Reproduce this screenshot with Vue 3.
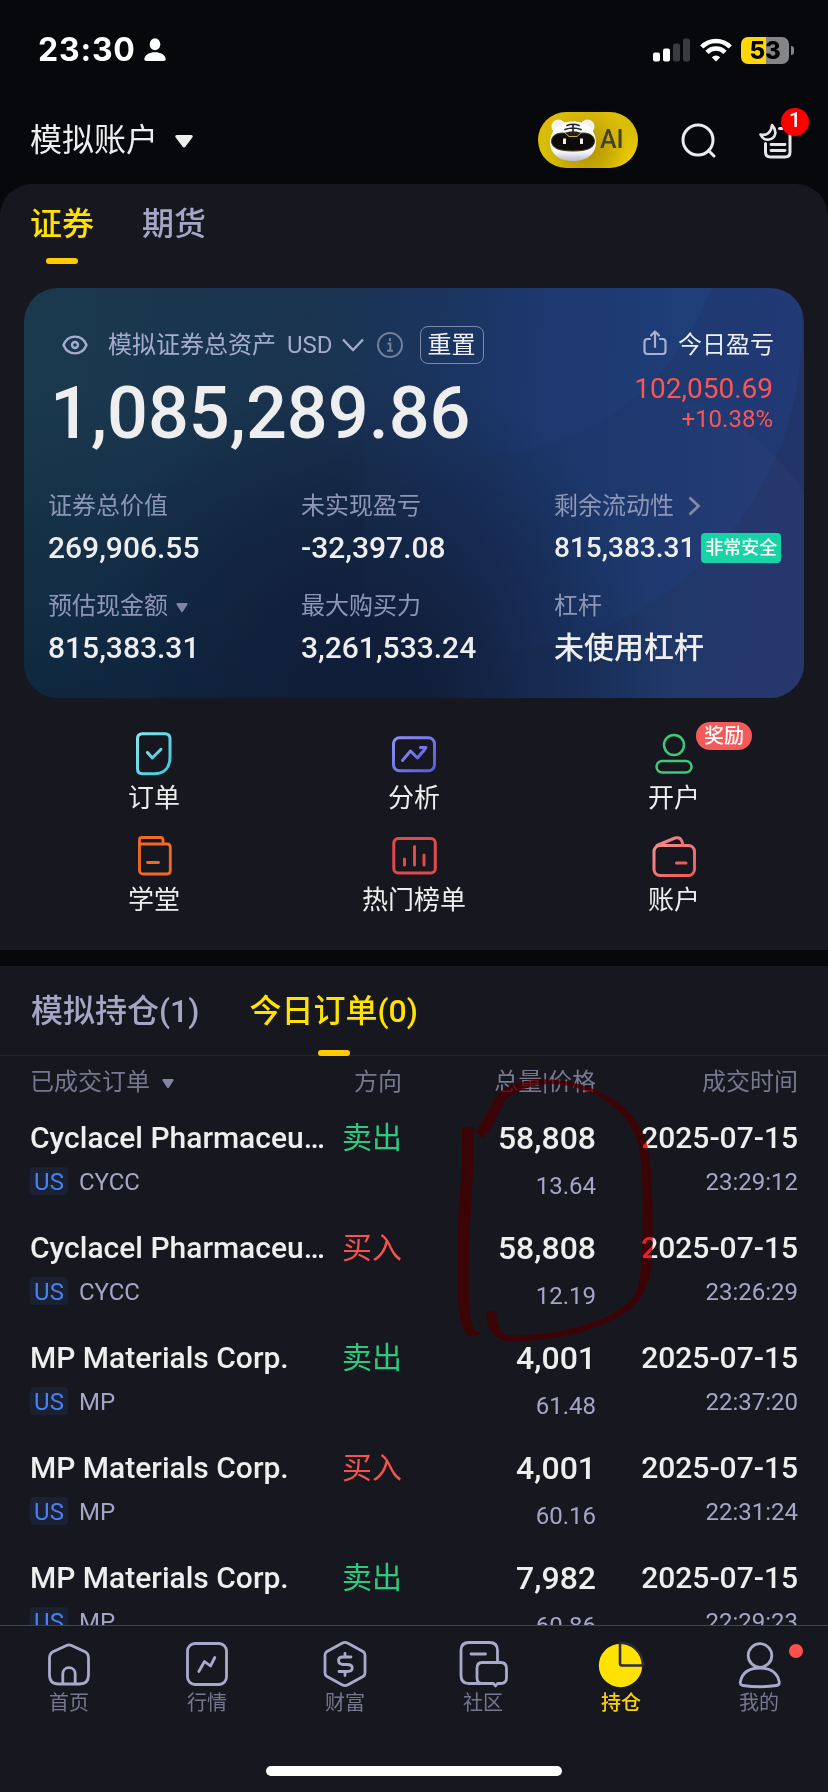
<script setup>
const stats = [
  { label: '证券总价值', value: '269,906.55' },
  { label: '未实现盈亏', value: '-32,397.08' },
  { label: '剩余流动性', value: '815,383.31', more: true, tag: '非常安全' },
  { label: '预估现金额', value: '815,383.31', drop: true },
  { label: '最大购买力', value: '3,261,533.24' },
  { label: '杠杆', value: '未使用杠杆' },
]

const shortcuts = [
  { id: 'order', label: '订单' },
  { id: 'analysis', label: '分析' },
  { id: 'open', label: '开户', badge: '奖励' },
  { id: 'school', label: '学堂' },
  { id: 'rank', label: '热门榜单' },
  { id: 'wallet', label: '账户' },
]

const orders = [
  { name: 'Cyclacel Pharmaceu…', code: 'CYCC', side: '卖出', qty: '58,808', price: '13.64', date: '2025-07-15', time: '23:29:12' },
  { name: 'Cyclacel Pharmaceu…', code: 'CYCC', side: '买入', qty: '58,808', price: '12.19', date: '2025-07-15', time: '23:26:29' },
  { name: 'MP Materials Corp.', code: 'MP', side: '卖出', qty: '4,001', price: '61.48', date: '2025-07-15', time: '22:37:20' },
  { name: 'MP Materials Corp.', code: 'MP', side: '买入', qty: '4,001', price: '60.16', date: '2025-07-15', time: '22:31:24' },
  { name: 'MP Materials Corp.', code: 'MP', side: '卖出', qty: '7,982', price: '60.86', date: '2025-07-15', time: '22:29:23' },
]

const tabs = [
  { id: 'home', label: '首页' },
  { id: 'market', label: '行情' },
  { id: 'wealth', label: '财富' },
  { id: 'social', label: '社区' },
  { id: 'hold', label: '持仓', active: true },
  { id: 'me', label: '我的', dot: true },
]

const markLayers = ['multiply', 'lighten']
</script>

<template>
  <div class="screen">
    <div class="status">
      <span class="clock">23:30</span>
      <svg class="person" width="22" height="24" viewBox="0 0 22 24" fill="#fff">
        <ellipse cx="11" cy="6.2" rx="5.3" ry="6" />
        <path d="M2.500 23Q0 23 .4 20.500C1.500 16.500 5.500 14.300 11 14.300S20.500 16.500 21.600 20.500Q22 23 19.500 23Z" />
      </svg>
      <span class="grow"></span>
      <svg class="signal" width="37" height="24" viewBox="0 0 37 24">
        <rect x="0" y="14.500" width="7" height="9" rx="2" fill="#fff" />
        <rect x="10" y="10.500" width="7" height="13" rx="2" fill="#fff" />
        <rect x="20" y="5.500" width="7" height="18" rx="2" fill="#3b3b3d" />
        <rect x="30" y="0.500" width="7" height="23" rx="2" fill="#3b3b3d" />
      </svg>
      <svg class="wifi" width="32" height="24" viewBox="0 0 32 24" fill="none" stroke="#fff" stroke-width="4.600">
        <path d="M1.800 9C9.500 .9 22.500 .9 30.200 9" />
        <path d="M7 14.300C12 9.300 20 9.300 25 14.300" />
        <path d="M11.800 19.200Q16 15.600 20.200 19.200L16 23.600Z" fill="#fff" stroke="none" />
      </svg>
      <span class="battery">53</span>
      <span class="nub"></span>
    </div>

    <div class="topbar">
      <span class="account">模拟账户</span>
      <svg class="caret" width="18" height="13" viewBox="0 0 18 13"><path d="M2 0H16Q19 .3 17 3L10.500 11.500Q9 13.500 7.500 11.500L1 3Q-1 .3 2 0Z" fill="#eee" /></svg>
      <span class="grow"></span>
      <div class="ai">
        <svg width="48" height="44" viewBox="0 0 48 44">
          <defs>
            <linearGradient id="fur" x1="0" y1="0" x2="0" y2="1">
              <stop offset="0" stop-color="#fff" /><stop offset=".78" stop-color="#f4f4f8" /><stop offset="1" stop-color="#b9b9cc" />
            </linearGradient>
          </defs>
          <circle cx="9.500" cy="8.500" r="7" fill="#f2f2f2" />
          <circle cx="38.500" cy="8.500" r="7" fill="#f2f2f2" />
          <path d="M24 3.500C38 3.500 46.500 12 47 24C47 36 38 43 24 43S1 36 1 24C1.500 12 10 3.500 24 3.500Z" fill="url(#fur)" />
          <path d="M24 17C35 13 45 15 45.500 23C45.500 30 38 33 24 33S2.500 30 2.500 23C3 15 13 13 24 17Z" fill="#0f0b0b" stroke="#46401a" stroke-width="1" />
          <path d="M18 7.500Q24 5 30 7.500M16 11.500Q24 8.500 32 11.500M18 15Q24 13 30 15M24 6.500V18" stroke="#242424" stroke-width="1.700" fill="none" stroke-linecap="round" />
          <path d="M16 14.800L20 18.500H28L32 14.800" stroke="#c9b41f" stroke-width="1" fill="#222" />
          <path d="M15.500 20.500V26M32.500 20.500V26" stroke="#eee" stroke-width="3" />
        </svg>
        <span>AI</span>
      </div>
      <svg class="search" width="36" height="36" viewBox="0 0 36 36" fill="none" stroke="#ebebed" stroke-width="3" stroke-linecap="round">
        <circle cx="17" cy="17" r="15" /><path d="M27.500 27.500L33 33" />
      </svg>
      <div class="inbox">
        <svg width="34" height="36" viewBox="0 0 34 36" fill="none" stroke="#e6e6e8" stroke-width="3" stroke-linecap="round" stroke-linejoin="round">
          <path d="M13 2C18.500 8 17 15 10 16.500C6 17 3 15 1.500 11.500C8 13 12.500 9 13 2Z" stroke-width="2.600" />
          <path d="M6.500 20.500V29Q6.500 34 11.500 34H26Q31 34 31 29V12M20.500 5.500H23" />
          <path d="M12 21.500H26M12 27.500H26" stroke-width="2.800" />
        </svg>
        <b>1</b>
      </div>
    </div>

    <section class="assets">
      <div class="market-tabs">
        <span class="on">证券</span><span>期货</span>
      </div>

      <div class="card">
        <svg class="orbs" width="780" height="410" viewBox="24 288 780 410">
          <defs>
            <linearGradient id="orbA" x1="0" x2="1"><stop offset=".45" stop-color="#2850a0" stop-opacity="0" /><stop offset="1" stop-color="#2850a0" stop-opacity=".2" /></linearGradient>
            <linearGradient id="orbB" x1="0" x2="1"><stop offset=".5" stop-color="#2148a0" stop-opacity="0" /><stop offset="1" stop-color="#2148a0" stop-opacity=".25" /></linearGradient>
            <linearGradient id="orbC" x1="0" x2="1"><stop offset=".5" stop-color="#38407c" stop-opacity="0" /><stop offset="1" stop-color="#38407c" stop-opacity=".3" /></linearGradient>
          </defs>
          <circle cx="480" cy="330" r="322" fill="url(#orbB)" />
          <circle cx="470" cy="200" r="257" fill="url(#orbA)" />
          <circle cx="610" cy="620" r="232" fill="url(#orbC)" />
        </svg>
        <div class="card-head">
          <svg class="eye" width="26" height="20" viewBox="0 0 26 20" fill="none" stroke="#a5accb" stroke-width="2.400">
            <path d="M1.500 10C6 -1.200 20 -1.200 24.500 10C20 21.200 6 21.200 1.500 10Z" /><circle cx="13" cy="10" r="3" />
          </svg>
          <span class="total-label">模拟证券总资产</span>
          <span class="usd">USD</span>
          <svg class="chev" width="22" height="14" viewBox="0 0 22 14" fill="none" stroke="#a5accb" stroke-width="2.400"><path d="M1 1.500L11 12L21 1.500" /></svg>
          <svg class="info" width="26" height="26" viewBox="0 0 26 26" fill="none" stroke="#757f9c" stroke-width="2">
            <circle cx="13" cy="13" r="12" /><path d="M13 6V9M10.500 11.500H13.300V18.500M10 18.700H16" />
          </svg>
          <span class="reset">重置</span>
          <span class="grow"></span>
          <svg class="share" width="24" height="26" viewBox="0 0 24 26" fill="none" stroke="#a9b0cf" stroke-width="2.200" stroke-linecap="round" stroke-linejoin="round">
            <path d="M7 9H4.500Q1.500 9 1.500 12V21Q1.500 24 4.500 24H19.500Q22.500 24 22.500 21V12Q22.500 9 19.500 9H17M12 17V2M8 5.500L12 1.500L16 5.500" />
          </svg>
          <span class="today">今日盈亏</span>
        </div>
        <div class="card-main">
          <span class="total">1,085,289.86</span>
          <div class="pnl"><span>102,050.69</span><small>+10.38%</small></div>
        </div>
        <div class="stats">
          <div v-for="s in stats" :key="s.label" class="stat">
            <div class="stat-label">
              {{ s.label }}
              <svg v-if="s.more" class="more" width="13" height="20" viewBox="0 0 13 20" fill="none" stroke="#8289a5" stroke-width="2.800"><path d="M1.500 1.500L10.500 10L1.500 18.500" /></svg>
              <svg v-if="s.drop" class="drop" width="12" height="10" viewBox="0 0 12 10"><path d="M1.500 0H10.500Q12.500 .3 11 2.300L7 8.500Q6 10 5 8.500L1 2.300Q-.5 .3 1.500 0Z" fill="#7f84a6" /></svg>
            </div>
            <div class="stat-value" :class="{ small: s.tag }">{{ s.value }}<em v-if="s.tag">{{ s.tag }}</em></div>
          </div>
        </div>
      </div>

      <div class="shortcuts">
        <div v-for="s in shortcuts" :key="s.id" class="shortcut">
          <div class="pic">
            <svg width="48" height="48" viewBox="0 0 48 48" fill="none" stroke-width="3" stroke-linecap="round" stroke-linejoin="round">
              <defs v-if="s.id === 'order'">
                <linearGradient id="cy" x1="0" y1="0" x2="1" y2="1"><stop offset="0" stop-color="#8ae6ee" /><stop offset="1" stop-color="#3fc4de" /></linearGradient>
                <linearGradient id="vi" x1="0" y1="0" x2="1" y2="1"><stop offset="0" stop-color="#9090f4" /><stop offset="1" stop-color="#575be0" /></linearGradient>
                <linearGradient id="pk" x1="0" y1="0" x2="1" y2="1"><stop offset="0" stop-color="#f59090" /><stop offset="1" stop-color="#ec5858" /></linearGradient>
              </defs>
              <g v-if="s.id === 'order'" stroke="url(#cy)">
                <path d="M12.500 3.800H35Q40 3.800 40 8.800V27C40 38 34 43.800 24 43.800H12.500Q7.500 43.800 7.500 38.800V8.800Q7.500 3.800 12.500 3.800Z" />
                <path d="M17.500 22.500L22.300 28L31 19.300" />
              </g>
              <g v-else-if="s.id === 'analysis'" stroke="url(#vi)">
                <rect x="3.500" y="7.800" width="41" height="33" rx="6" />
                <path d="M12.500 30.500L20.500 21L27.500 28L34.500 19.500M30.500 17.500H36L33 22" />
              </g>
              <g v-else-if="s.id === 'open'" stroke="#3fc878" stroke-width="2.500">
                <circle cx="24" cy="15" r="10" />
                <rect x="6.500" y="31" width="35" height="11.500" rx="5.750" />
              </g>
              <g v-else-if="s.id === 'school'" stroke="#f26a21" stroke-width="2.800" transform="translate(0 1.500)">
                <path d="M9.500 10V6Q9.500 4 11.500 4H30.500Q33 4 33 6.500V9.800" />
                <path d="M9.500 10.500H37Q40.300 10.500 40.300 14V37Q40.300 40.500 37.300 40.500H13.500Q9.500 40.500 9.500 36.500Z" />
                <path d="M17.500 29H28.500" />
              </g>
              <g v-else-if="s.id === 'rank'" stroke="#e2494d" transform="translate(0 2)">
                <rect x="3.800" y="4.500" width="41.500" height="34.500" rx="4.500" />
                <path d="M14.500 25V31M24.500 12.500V31M34 21V31" />
              </g>
              <g v-else stroke="url(#pk)" transform="translate(0 1.500)">
                <rect x="4" y="12" width="40.500" height="30" rx="6" />
                <path d="M7 12L25 4.500Q31.500 2.500 33 11.500M26.500 29.500H36" />
              </g>
            </svg>
            <i v-if="s.badge">{{ s.badge }}</i>
          </div>
          <span>{{ s.label }}</span>
        </div>
      </div>
    </section>

    <section class="orders">
      <div class="order-tabs">
        <span>模拟持仓(1)</span><span class="on">今日订单(0)</span>
      </div>
      <div class="row head">
        <span>已成交订单<svg class="drop head-drop" width="12" height="10" viewBox="0 0 12 10"><path d="M1.500 0H10.500Q12.500 .3 11 2.300L7 8.500Q6 10 5 8.500L1 2.300Q-.5 .3 1.500 0Z" fill="#8485a0" /></svg></span>
        <span class="r">方向</span>
        <span class="r">总量|价格</span>
        <span class="r">成交时间</span>
      </div>
      <div v-for="(o, i) in orders" :key="i" class="row order">
        <div>
          <div class="name">{{ o.name }}</div>
          <div class="code"><b>US</b>{{ o.code }}</div>
        </div>
        <div class="r side" :class="o.side === '卖出' ? 'sell' : 'buy'">{{ o.side }}</div>
        <div class="r">
          <div class="qty">{{ o.qty }}</div>
          <div class="sub price">{{ o.price }}</div>
        </div>
        <div class="r">
          <div class="date">{{ o.date }}</div>
          <div class="sub">{{ o.time }}</div>
        </div>
      </div>
    </section>

    <nav class="tabbar">
      <div v-for="t in tabs" :key="t.id" class="tab" :class="{ active: t.active }">
        <div class="tab-pic">
          <svg width="50" height="50" viewBox="0 0 50 50" fill="none" stroke="#a9aaca" stroke-width="2.800" stroke-linecap="round" stroke-linejoin="round">
            <g v-if="t.id === 'home'">
              <path d="M22.500 5.500Q25 4.300 27.500 5.500L41 11.800Q44.500 13.500 44.500 18V35Q44.500 44 35.500 44H14.500Q5.500 44 5.500 35V18Q5.500 13.500 9 11.800Z" />
              <path d="M18.800 43.500V34C18.800 25.500 31.200 25.500 31.200 34V43.500" />
            </g>
            <g v-else-if="t.id === 'market'">
              <rect x="5.500" y="3.500" width="39" height="41" rx="7.500" />
              <path d="M16.800 31.500L22.500 21.500L28.500 26L32.800 17.500" />
            </g>
            <g v-else-if="t.id === 'wealth'">
              <path d="M22.500 3Q25 1.700 27.500 3L43 11.500Q45 12.800 45 15V33Q45 35.200 43 36.500L27.500 45Q25 46.300 22.500 45L7 36.500Q5 35.200 5 33V15Q5 12.800 7 11.500Z" />
              <path d="M31 17H23C17 17 17 24 23 24.500H27C34 24.500 34 31.500 27 31.500H19M25 13.500V16M25 33V35.500" />
            </g>
            <g v-else-if="t.id === 'social'" transform="translate(-2.500 0)">
              <path d="M18.500 43.500H13.500Q5.500 43.500 5.500 35.500V10.500Q5.500 2.500 13.500 2.500H34Q42 2.500 42 10.500V20.500" />
              <path d="M15.500 14H30" />
              <path d="M26.500 22.500H45Q51 22.500 51 28.500V37.500Q51 43.500 45 43.500H42L40 46L38 43.500H26.500Q21.500 43.500 21.500 37.500V28.500Q21.500 22.500 26.500 22.500Z" />
              <path d="M18 43.500H27" />
            </g>
            <g v-else-if="t.id === 'hold'">
              <circle cx="24.500" cy="25.500" r="21.700" fill="#ffe200" stroke="none" />
              <path d="M24 2.800C36 2.800 47 12 47 25.500H26Q24 25.500 24 23.500Z" stroke="#2b2d38" stroke-width="2.600" />
            </g>
            <g v-else>
              <circle cx="26" cy="15.500" r="11.800" />
              <path d="M26 28C37 28 43.500 33 45.300 42Q45.500 45 42.500 45.500Q26 48 9 45.500Q6 45 6.300 42C8 33 15 28 26 28Z" />
            </g>
          </svg>
          <i v-if="t.dot"></i>
        </div>
        <span>{{ t.label }}</span>
      </div>
      <div class="home-bar"></div>
    </nav>

    <svg v-for="m in markLayers" :key="m" class="mark" :class="m" width="200" height="320" viewBox="0 0 600 960">
      <path d="M46 262L82 260C80 350 78 430 70 540C65 640 62 760 70 830C75 860 85 878 103 880C95 890 70 890 60 884C38 860 32 800 32 740C32 640 30 560 38 470C44 400 44 330 46 262Z" />
      <path d="M86 275C110 240 130 200 146 172C165 140 220 118 300 118C370 120 450 145 500 178C560 220 590 270 602 320C615 380 618 480 617 600C616 680 608 730 590 760C560 815 490 850 400 878C320 898 230 906 178 904C135 895 118 860 118 820C120 810 144 810 148 820C150 860 160 880 182 886C250 888 340 878 400 858C480 835 540 800 560 770C582 730 584 660 586 600C588 480 588 380 575 320C565 260 520 215 480 185C430 150 360 132 310 132C240 135 195 160 178 180C160 200 145 250 125 275L108 296Z" />
    </svg>
  </div>
</template>

<style>
html, body { margin: 0; background: #07080c; }
</style>

<style scoped>
* { box-sizing: border-box; }
.screen { position: relative; display: flex; flex-direction: column; width: 828px; height: 1792px; overflow: hidden; background: #07080c; font-family: Roboto, "Noto Sans CJK SC", sans-serif; color: #eee; }
.screen svg { display: block; flex: none; overflow: visible; }
.grow { flex: 1; }
.status { display: flex; align-items: center; height: 100px; padding: 0 34px 0 38px; flex: none; }
.clock { font: 700 32px/40px Inter, sans-serif; color: #fff; width: 106px; letter-spacing: .8px; white-space: nowrap; }
.signal { margin-right: 10px; }
.wifi { margin-right: 9px; }
.battery { width: 48px; height: 27px; border-radius: 7px; background: linear-gradient(90deg, #ffd60a 25px, #858588 25px); color: #000; font: 800 24px/27px Inter, sans-serif; text-align: center; letter-spacing: -.3px; }
.nub { width: 3px; height: 9px; margin-left: 2px; border-radius: 0 4px 4px 0; background: #858588; }
.topbar { display: flex; align-items: center; height: 84px; flex: none; padding: 0 35px 4px 30px; }
.account { font-size: 32px; line-height: 40px; width: 145px; font-weight: 400; white-space: nowrap; }
.caret { margin-top: 2px; }
.ai { display: flex; align-items: center; width: 100px; height: 56px; padding-left: 11px; border-radius: 28px; background: radial-gradient(circle at 48px 38px, #b39006 0, #c7a905 22px, transparent 42px), linear-gradient(160deg, #dcb90b, #d9bf05 60%, #f0d000); }
.ai span { font-size: 25px; color: #41402f; margin-left: 3px; line-height: 30px; font-weight: 500; }
.search { margin: 2px 43px 0 43px; }
.inbox { position: relative; width: 33px; height: 36px; }
.inbox svg { margin-top: 1px; margin-left: -1px; }
.inbox b { position: absolute; left: 21px; top: -14px; width: 28px; height: 28px; border-radius: 50%; background: #f00; color: #fff; font: 500 21px/25px Roboto, sans-serif; text-align: center; }
.assets { height: 766px; flex: none; background: #17181f; border-radius: 32px 32px 0 0; padding: 0 24px; }
.market-tabs { display: flex; gap: 48px; height: 104px; padding: 18px 0 0 6px; font-size: 32px; line-height: 44px; color: #a5a6c6; font-weight: 500; }
.on { position: relative; color: #ffe200; }
.on::after { content: ""; position: absolute; left: 50%; bottom: 24px; width: 32px; height: 6px; margin-left: -16px; border-radius: 3px; background: #ffcb00; }
.card { position: relative; width: 780px; height: 410px; border-radius: 34px; overflow: hidden; background: radial-gradient(ellipse 300px 330px at 340px 410px, #111e3a 20%, rgba(17, 30, 58, 0) 100%), linear-gradient(0deg, rgba(10, 34, 58, .75), rgba(10, 34, 58, 0) 75%) 0 0 / 340px 100% no-repeat, linear-gradient(97deg, #1b394d 0, #1a3450 35%, #1b3566 58%, #1d3766 80%, #23346a 100%); }
.orbs { position: absolute; inset: 0; }
.card-head, .card-main, .stats { position: relative; }
.card-head { display: flex; align-items: center; height: 40px; margin-top: 37px; padding: 0 30px 0 38px; font-size: 24px; line-height: 30px; color: #a5accb; white-space: nowrap; }
.total-label { margin-left: 20px; }
.usd { margin-left: 11px; }
.chev { margin-left: 9px; }
.info { margin: 0 17px 0 13px; }
.reset { width: 64px; height: 38px; border: 1px solid #7f89a8; border-radius: 8px; color: #f0f0f4; text-align: center; line-height: 36px; }
.share { margin-right: 11px; margin-top: -4px; }
.today { color: #eee; }
.card-main { display: flex; justify-content: space-between; height: 96px; padding: 0 31px 0 26px; }
.total { font-size: 72px; line-height: 92px; font-weight: 500; padding-top: 3px; }
.pnl { display: flex; flex-direction: column; align-items: flex-end; padding-top: 8px; color: #fd5555; font-size: 28px; line-height: 32px; }
.pnl small { font-size: 24px; line-height: 28px; }
.stats { display: grid; grid-template-columns: repeat(3, 253px); grid-auto-rows: 100px; padding: 29px 0 0 24px; }
.stat-label { display: flex; align-items: center; font-size: 24px; line-height: 32px; color: #8e96b6; }
.more { margin-left: 14px; }
.drop { margin-left: 8px; margin-top: 3px; }
.stat-value { display: flex; align-items: center; font-size: 30px; line-height: 40px; margin-top: 6px; font-weight: 500; white-space: nowrap; }
.small { font-size: 28px; }
.stat-value em { font-style: normal; font-size: 18px; font-weight: 500; width: 80px; height: 30px; line-height: 29px; margin-left: 6px; text-align: center; border-radius: 4px; background: #17d3a5; color: #fff; }
.shortcuts { display: grid; grid-template-columns: repeat(3, 260px); grid-auto-rows: 102px; padding-top: 32px; }
.shortcut { display: flex; flex-direction: column; align-items: center; font-size: 26px; line-height: 36px; }
.shortcut > span { margin-top: 2px; }
.pic { position: relative; width: 48px; height: 48px; }
.pic i { position: absolute; left: 46px; top: -8px; width: 56px; height: 28px; border-radius: 14px; background: #f55a5a; font: 500 20px/28px Roboto, "Noto Sans CJK SC", sans-serif; color: #fff; text-align: center; }
.orders { margin-top: 16px; height: 659px; flex: none; overflow: hidden; background: #17181f; }
.order-tabs { display: flex; gap: 50px; height: 90px; padding: 23px 0 0 31px; border-bottom: 1px solid #25262f; font-size: 32px; line-height: 44px; font-weight: 500; color: #a5a6c6; }
.order-tabs .on::after { bottom: -1px; }
.row { display: grid; grid-template-columns: 292px 80px 194px 202px; padding-left: 30px; white-space: nowrap; }
.r { text-align: right; }
.head { height: 58px; padding-top: 10px; align-items: start; font-size: 24px; line-height: 32px; color: #77788f; }
.head span:first-child { display: flex; align-items: center; }
.head-drop { margin-left: 12px; }
.order { height: 110px; font-size: 30px; line-height: 40px; font-weight: 500; padding-top: 4px; }
.code, .sub { font-size: 24px; line-height: 30px; font-weight: 400; color: #a5a6c6; margin-top: 9px; }
.code b { display: inline-block; width: 38px; height: 28px; line-height: 30px; margin-right: 11px; text-align: center; font-weight: 400; color: #4a80f5; background: #1a2133; border-radius: 4px; }
.qty { font-size: 32px; }
.price { margin-top: 13px; }
.side { font-weight: 400; }
.sell { color: #2cc97e; }
.buy { color: #f4534f; }
.tabbar { position: relative; display: grid; grid-template-columns: repeat(6, 138px); height: 167px; flex: none; background: #17181f; border-top: 1px solid #44454f; }
.tab { display: flex; flex-direction: column; align-items: center; padding-top: 14px; font-size: 20px; line-height: 26px; color: #77788f; }
.tab-pic { position: relative; width: 50px; height: 50px; }
.tab-pic i { position: absolute; left: 55px; top: 4px; width: 14px; height: 14px; border-radius: 50%; background: #ff5050; }
.active { color: #ffd100; font-weight: 500; }
.home-bar { position: absolute; left: 266px; top: 140px; width: 296px; height: 10px; border-radius: 5px; background: #fff; }
.mark { position: absolute; left: 446.67px; top: 1040px; pointer-events: none; }
.multiply { mix-blend-mode: multiply; fill: #ff2030; }
.lighten { mix-blend-mode: lighten; fill: #3a0004; }
</style>
